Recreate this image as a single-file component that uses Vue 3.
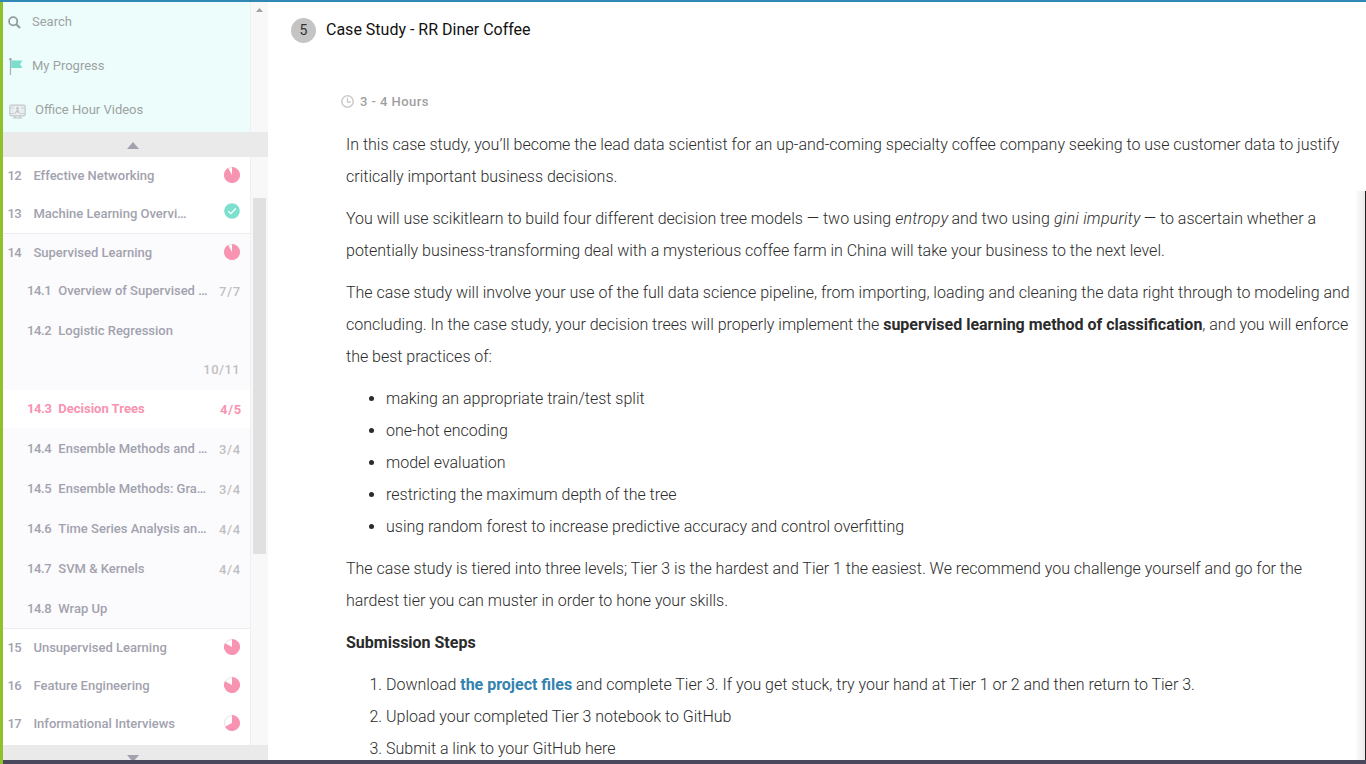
<script setup>
const before = [
  { n: 12, t: 'Effective Networking', p: 0.92 },
  { n: 13, t: 'Machine Learning Overvi…', done: true },
]
const current = { n: 14, t: 'Supervised Learning', p: 0.92 }
const lessons = [
  { n: '14.1', t: 'Overview of Supervised …', c: '7/7', k: 'first' },
  { n: '14.2', t: 'Logistic Regression', c: '10/11', k: 'wrapped' },
  { n: '14.3', t: 'Decision Trees', c: '4/5', k: 'active' },
  { n: '14.4', t: 'Ensemble Methods and …', c: '3/4' },
  { n: '14.5', t: 'Ensemble Methods: Gra…', c: '3/4' },
  { n: '14.6', t: 'Time Series Analysis an…', c: '4/4' },
  { n: '14.7', t: 'SVM & Kernels', c: '4/4' },
  { n: '14.8', t: 'Wrap Up', c: '' },
]
const after = [
  { n: 15, t: 'Unsupervised Learning', p: 0.83 },
  { n: 16, t: 'Feature Engineering', p: 0.83 },
  { n: 17, t: 'Informational Interviews', p: 0.67 },
]
function pie(p) {
  const a = p * 2 * Math.PI
  const x = (8 + 8 * Math.sin(a)).toFixed(2)
  const y = (8 - 8 * Math.cos(a)).toFixed(2)
  return `M8 8V0A8 8 0 1 1 ${x} ${y}Z`
}
</script>

<template>
  <div class="page">
    <div class="topbar"></div>
    <div class="body">
      <div class="edge"></div>
      <aside class="sidebar">
        <div class="tools">
          <nav class="menu">
            <div class="tool">
              <svg class="i-search" width="13" height="13" viewBox="0 0 13 13"><circle cx="5.2" cy="5.2" r="4.1" fill="none" stroke="#949c9b" stroke-width="1.8" /><path d="M8.2 8.2L12 12" stroke="#949c9b" stroke-width="2.1" /></svg>
              <span>Search</span>
            </div>
            <div class="tool">
              <svg class="i-flag" width="14" height="17" viewBox="0 0 14 17"><path d="M1.5 1V17" stroke="#a9b1b2" stroke-width="1.2" /><circle cx="1.5" cy="1.3" r="1.2" fill="#a0a6a8" /><path d="M2.2 2.5H13.5L11 6.3L13.5 10H2.2Z" fill="#7bdfcb" /></svg>
              <span>My Progress</span>
            </div>
            <div class="tool">
              <svg class="i-video" width="17" height="15" viewBox="0 0 17 15"><rect x="0.8" y="1.2" width="15.4" height="10.6" rx="1.2" fill="#e6eeee" stroke="#c3c8ce" stroke-width="1.2" /><path d="M1 4H5M12 4H16M1 9.5H16" stroke="#cdd1d5" /><rect x="5.5" y="2" width="6" height="8" fill="#edf0f1" /><circle cx="8.5" cy="4.2" r="1.3" fill="#bfc3c8" /><path d="M6.1 9.6L8.5 5.5L10.9 9.6M8.5 5.5V9" fill="none" stroke="#bfc3c8" /><path d="M6 12V14M11 12V14M4 14H13" stroke="#bfc3c8" stroke-width="1.2" /></svg>
              <span>Office Hour Videos</span>
            </div>
          </nav>
          <div class="gutter"><svg width="7" height="4" viewBox="0 0 7 4"><path d="M0 4L3.5 0L7 4Z" fill="#a3a3a3" /></svg></div>
        </div>
        <div class="pager up"><svg width="12" height="7" viewBox="0 0 12 7"><path d="M0 7L6 0L12 7Z" fill="#a2a2ae" /></svg></div>
        <div class="units">
          <div class="list">
            <div v-for="u in before" :key="u.n" class="unit outer">
              <span class="num">{{ u.n }}</span><span class="name">{{ u.t }}</span>
              <svg v-if="u.done" class="status done" width="16" height="16" viewBox="0 0 16 16"><circle cx="8" cy="8" r="7.8" fill="#7de0cf" /><path d="M4.2 8.2L6.8 10.7L11.8 5.5" fill="none" stroke="#fff" stroke-width="1.3" /></svg>
              <svg v-else class="status" width="16" height="16" viewBox="0 0 16 16"><circle cx="8" cy="8" r="7.5" fill="#fff" stroke="#e4e4e4" /><path :d="pie(u.p)" fill="#f893b1" /></svg>
            </div>
            <section class="open">
              <div class="unit">
                <span class="num">{{ current.n }}</span><span class="name">{{ current.t }}</span>
                <svg class="status" width="16" height="16" viewBox="0 0 16 16"><circle cx="8" cy="8" r="7.5" fill="#fff" stroke="#e4e4e4" /><path :d="pie(current.p)" fill="#f893b1" /></svg>
              </div>
              <div v-for="l in lessons" :key="l.n" class="lesson" :class="l.k">
                <span class="lnum">{{ l.n }}</span><span class="lname">{{ l.t }}</span><span class="count">{{ l.c }}</span>
              </div>
            </section>
            <div v-for="u in after" :key="u.n" class="unit outer">
              <span class="num">{{ u.n }}</span><span class="name">{{ u.t }}</span>
              <svg class="status" width="16" height="16" viewBox="0 0 16 16"><circle cx="8" cy="8" r="7.5" fill="#fff" stroke="#e4e4e4" /><path :d="pie(u.p)" fill="#f893b1" /></svg>
            </div>
          </div>
          <div class="scroll"><div class="thumb"></div></div>
        </div>
        <div class="pager down"><svg width="12" height="7" viewBox="0 0 12 7"><path d="M0 0L6 7L12 0Z" fill="#a2a2ae" /></svg></div>
      </aside>
      <main class="content">
        <header class="head"><span class="badge">5</span><h1>Case Study - RR Diner Coffee</h1></header>
        <div class="time">
          <svg width="13" height="13" viewBox="0 0 13 13"><circle cx="6.5" cy="6.5" r="5.7" fill="none" stroke="#cacaca" stroke-width="1.5" /><path d="M6.5 2.8V7H9.7" fill="none" stroke="#cacaca" stroke-width="1.3" /></svg>
          <span>3 - 4 Hours</span>
        </div>
        <article>
          <p>In this case study, you’ll become the lead data scientist for an up-and-coming specialty coffee company seeking to use customer data to justify<br>critically important business decisions.</p>
          <p>You will use scikitlearn to build four different decision tree models — two using <em>entropy</em> and two using <em>gini impurity</em> — to ascertain whether a<br>potentially business-transforming deal with a mysterious coffee farm in China will take your business to the next level.</p>
          <p>The case study will involve your use of the full data science pipeline, from importing, loading and cleaning the data right through to modeling and<br>concluding. In the case study, your decision trees will properly implement the <strong>supervised learning method of classification</strong>, and you will enforce<br>the best practices of:</p>
          <ul>
            <li>making an appropriate train/test split</li>
            <li>one-hot encoding</li>
            <li>model evaluation</li>
            <li>restricting the maximum depth of the tree</li>
            <li>using random forest to increase predictive accuracy and control overfitting</li>
          </ul>
          <p>The case study is tiered into three levels; Tier 3 is the hardest and Tier 1 the easiest. We recommend you challenge yourself and go for the<br>hardest tier you can muster in order to hone your skills.</p>
          <p><strong>Submission Steps</strong></p>
          <ol>
            <li>Download <a>the project files</a> and complete Tier 3. If you get stuck, try your hand at Tier 1 or 2 and then return to Tier 3.</li>
            <li>Upload your completed Tier 3 notebook to GitHub</li>
            <li>Submit a link to your GitHub here</li>
          </ol>
        </article>
      </main>
      <div class="right-edge"><div class="shade"></div></div>
    </div>
    <div class="bottom"><i></i><b></b></div>
  </div>
</template>

<style>
body { margin: 0; overflow: hidden; }
</style>

<style scoped>
* { box-sizing: border-box; }
.page { width: 1366px; height: 764px; overflow: hidden; display: flex; flex-direction: column; background: #fff; font-family: Roboto, sans-serif; }
.topbar { height: 2px; background: #3187b3; flex: none; }
.body { height: 758px; display: flex; }
.edge { width: 3px; background: #8fc12b; flex: none; }
.sidebar { width: 265px; flex: none; display: flex; flex-direction: column; overflow: hidden; white-space: nowrap; }
.tools { height: 130px; display: flex; flex: none; }
.menu { width: 247px; background: #edfdfb; padding-left: 5px; }
.tool { display: flex; align-items: center; height: 44px; margin-top: -3px; margin-bottom: 3px; font-size: 13px; color: #9da2a3; }
.tool span { line-height: 16px; padding-top: 2px; }
.i-search { margin-right: 11px; margin-top: 3px; }
.i-flag { margin-left: 1px; margin-right: 9px; margin-top: 2px; }
.i-video { margin-right: 9px; margin-left: 1px; margin-top: 4px; }
.gutter { width: 18px; background: #f8f8f8; border-left: 1px solid #efefef; padding: 5px 0 0 5px; line-height: 0; }
.pager { height: 25px; background: #eaeaea; flex: none; padding: 10px 0 0 124px; line-height: 0; }
.down { height: 15px; overflow: hidden; }
.units { display: flex; height: 588px; flex: none; }
.list { width: 247px; font-weight: 500; font-size: 13px; color: #a2a2ae; }
.unit { height: 38px; display: flex; align-items: center; padding-left: 4.4px; }
.outer { padding-bottom: 2px; }
.num { width: 26px; font-weight: 500; letter-spacing: -.5px; }
.name { flex: 1; }
.status { margin-right: 10px; margin-top: -1px; }
.done { margin-top: -4px; }
.open { background: #fbfbfd; border-top: 1px solid #ececec; border-bottom: 1px solid #ececec; height: 396px; }
.open .unit { height: 37px; }
.lesson { height: 40px; display: flex; align-items: center; padding-left: 24px; }
.lnum { width: 31.3px; letter-spacing: -.4px; }
.lname { width: 160.7px; }
.count { width: 24px; color: #bfbfc1; letter-spacing: .7px; padding-top: 2px; }
.first { height: 39px; }
.wrapped { height: 80px; flex-wrap: wrap; align-content: flex-start; }
.wrapped .lnum, .wrapped .lname { line-height: 42px; }
.wrapped .count { flex: 0 0 213px; text-align: right; line-height: 36px; padding: 0; letter-spacing: .4px; }
.active { background: #fff; color: #f893b1; height: 38px; font-weight: 700; padding-bottom: 2px; }
.active .count { color: #f893b1; padding-left: 1px; }
.scroll { width: 18px; background: #f8f8f8; border-left: 1px solid #efefef; padding: 41px 0 0 2px; }
.thumb { width: 13px; height: 356px; background: #e0e0e0; }
.content { flex: 1; min-width: 0; overflow: hidden; white-space: nowrap; }
.head { display: flex; align-items: center; padding: 15px 0 0 23px; height: 41px; }
.badge { width: 25px; height: 25px; border-radius: 50%; background: #c4c4c4; color: #333; font-size: 14px; text-align: center; line-height: 25px; margin-right: 10px; margin-top: 1px; }
h1 { margin: 0; font-size: 16px; font-weight: 400; color: #111; line-height: 24px; margin-top: -1px; }
.time { display: flex; align-items: center; gap: 6px; padding-left: 73px; margin-top: 48px; height: 20px; font-size: 13px; font-weight: 500; letter-spacing: .45px; color: #a0a0a0; }
article { padding: 18px 0 0 78px; font-size: 16px; font-weight: 300; line-height: 32px; word-spacing: -.04px; color: #2b2b2b; }
p { margin: 0 0 10px; }
ul, ol { margin: 0 0 10px; padding-left: 40px; }
em { letter-spacing: .25px; margin-left: .3px; margin-right: -.7px; }
strong { font-weight: 700; }
a { color: #3482b0; font-weight: 700; }
.right-edge { width: 0; position: relative; }
.shade { position: absolute; right: 0; top: 189px; width: 11px; height: 569px; border-right: 1px solid #222; background: linear-gradient(to right, #fff0, #e9e9e9); }
.bottom { display: flex; height: 4px; flex: none; }
.bottom i { width: 3px; background: #8fc12b; }
.bottom b { flex: 1; background: #4a485c; }
</style>
